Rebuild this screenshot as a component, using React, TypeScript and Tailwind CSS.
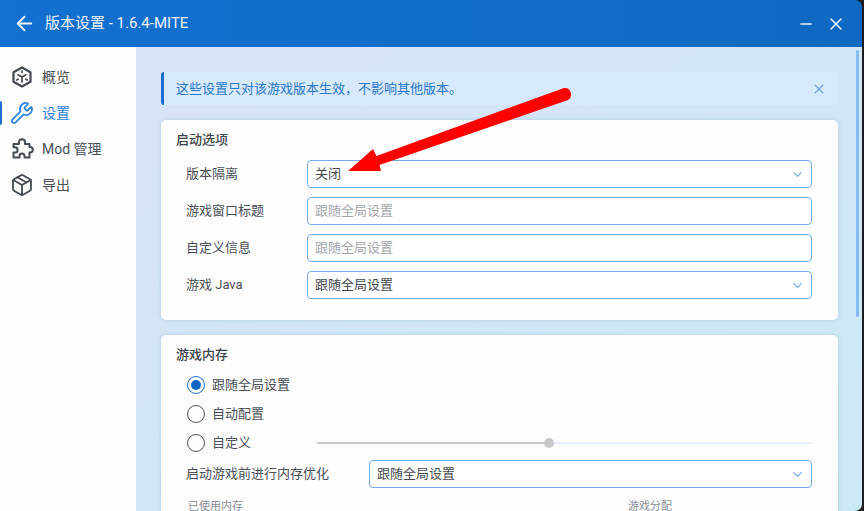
import { ArrowLeft, ChevronDown, Minus, Package, Wrench, X } from 'lucide-react'

const fontFamily = "font-['Roboto','Noto_Sans_CJK_SC',sans-serif]"

function CubeIcon() {
  return (
    <svg width="24" height="24" viewBox="0 0 24 24" fill="none" stroke="#444a52" strokeWidth="2.2" strokeLinejoin="round" strokeLinecap="round">
      <path d="M12 2.500 L20.500 7.200 V16.800 L12 21.500 L3.500 16.800 V7.200 Z" />
      <path d="M8 9.800 L12 12 L16 9.800 M12 12 V17 M12 6 V7.500 M6.800 15 L8.200 14.200 M17.200 15 L15.800 14.200" strokeWidth="1.700" />
    </svg>
  )
}

function PuzzleIcon() {
  return (
    <svg width="24" height="24" viewBox="0 0 24 24" fill="none" stroke="#444a52" strokeWidth="2" strokeLinejoin="round">
      <path d="M9 7 V5.200 a3 3 0 0 1 6 0 V7 H19.500 V10 H20 a2.800 2.800 0 0 1 0 5.600 H19.500 V20.500 H14.500 V19 a2.500 2.500 0 0 0 -5 0 V20.500 H3.500 V15.500 H5 a2.600 2.600 0 0 0 0 -5.200 H3.500 V7 Z" />
    </svg>
  )
}

function SideItem({ icon, label, active }: { icon: React.ReactNode; label: string; active?: boolean }) {
  return (
    <div className="relative flex h-9 items-center gap-[8px] pl-[10px]">
      {active && <div className="absolute top-[6px] left-0 h-6 w-[2px] rounded-r bg-[#1c6fd0]" />}
      {icon}
      <span className={`text-[14px] ${active ? 'text-[#2a7fe0]' : 'text-[#4a4f57]'}`}>{label}</span>
    </div>
  )
}

function Field({ value, placeholder, select }: { value?: string; placeholder?: string; select?: boolean }) {
  return (
    <div className="flex h-7 min-w-0 flex-1 items-center justify-between rounded-[4px] border border-[#74abe6] bg-white pr-[6px] pl-[7px] text-[13px]">
      <span className={value ? 'text-[#45494f]' : 'text-[#a3a6ab]'}>{value ?? placeholder}</span>
      {select && <ChevronDown size={15} strokeWidth={2} className="text-[#74abe6]" />}
    </div>
  )
}

function Row({ label, children }: { label: string; children: React.ReactNode }) {
  return (
    <div className="flex items-center">
      <span className="w-[121px] shrink-0 text-[13px] text-[#4a4f57]">{label}</span>
      {children}
    </div>
  )
}

function Radio({ label, checked }: { label: string; checked?: boolean }) {
  return (
    <div className="flex h-[29px] shrink-0 items-center gap-[7px]">
      <div
        className={`flex h-[18px] w-[18px] items-center justify-center rounded-full border-[1.5px] ${
          checked ? 'border-[#1c6fd0]' : 'border-[#4a4f57]'
        }`}
      >
        {checked && <div className="h-[10px] w-[10px] rounded-full bg-[#1166c4]" />}
      </div>
      <span className="text-[13px] text-[#4a4f57]">{label}</span>
    </div>
  )
}

export default function App() {
  return (
    <div className={`relative flex h-[511px] w-[864px] flex-col overflow-hidden bg-[#1d1d1f] ${fontFamily}`}>
      <div className="flex h-full w-[862px] flex-col overflow-hidden rounded-tr-[7px] rounded-br-[7px]">
        <header className="flex h-[47px] shrink-0 items-center bg-gradient-to-r from-[#1470d0] to-[#0f69c2] pr-[16px] pl-[13px] text-white">
          <ArrowLeft size={23} strokeWidth={2} className="text-[#eef5fc]" />
          <h1 className="ml-[9px] text-[15px] text-[#eaf2fb]">版本设置 - 1.6.4-MITE</h1>
          <div className="ml-auto flex items-center gap-[11px]">
            <Minus size={18} strokeWidth={1.7} className="text-[#e6effa]" />
            <X size={20} strokeWidth={1.8} className="text-[#f2f7fd]" />
          </div>
        </header>
        <div className="flex min-h-0 flex-1">
          <aside className="w-[136px] shrink-0 bg-[#fdfdfe] pt-[12px]">
            <SideItem icon={<CubeIcon />} label="概览" />
            <SideItem icon={<Wrench size={24} strokeWidth={1.7} className="text-[#2a7fe0]" />} label="设置" active />
            <SideItem icon={<PuzzleIcon />} label="Mod 管理" />
            <SideItem icon={<Package size={24} strokeWidth={1.8} className="text-[#444a52]" />} label="导出" />
          </aside>
          <main className="relative flex min-w-0 flex-1 flex-col gap-[15px] overflow-hidden bg-gradient-to-br from-[#d8e3f7] to-[#cbe9f5] pt-[25px] pr-[24px] pl-[25px]">
            <div className="absolute top-[3px] right-[3px] h-[267px] w-[3px] rounded-full bg-[#86bdf0]" />
            <div className="flex h-[33px] shrink-0 items-center rounded-[3px] border-l-[3px] border-[#1c6fd0] bg-[#d7e9fd] pr-[11px] pl-[12px]">
              <span className="text-[13px] text-[#2a78c8]">这些设置只对该游戏版本生效，不影响其他版本。</span>
              <X size={16} strokeWidth={1.7} className="ml-auto text-[#6ba4e0]" />
            </div>
            <section className="flex h-[200px] shrink-0 flex-col rounded-[5px] bg-[#fdfdfe] pt-[10px] pr-[26px] pl-[15px] shadow-[0_0_4px_rgba(120,160,200,0.35)]">
              <h2 className="mb-[11px] text-[13px] leading-[19px] font-medium text-[#3f444b]">启动选项</h2>
              <div className="flex flex-col gap-[9px] pl-[10px]">
                <Row label="版本隔离">
                  <Field value="关闭" select />
                </Row>
                <Row label="游戏窗口标题">
                  <Field placeholder="跟随全局设置" />
                </Row>
                <Row label="自定义信息">
                  <Field placeholder="跟随全局设置" />
                </Row>
                <Row label="游戏 Java">
                  <Field value="跟随全局设置" select />
                </Row>
              </div>
            </section>
            <section className="flex h-[200px] shrink-0 flex-col rounded-[5px] bg-[#fdfdfe] pt-[10px] pr-[26px] pl-[15px] shadow-[0_0_4px_rgba(120,160,200,0.35)]">
              <h2 className="mb-[6px] text-[13px] leading-[19px] font-medium text-[#3f444b]">游戏内存</h2>
              <div className="flex flex-col pl-[11px]">
                <Radio label="跟随全局设置" checked />
                <Radio label="自动配置" />
                <div className="flex items-center">
                  <Radio label="自定义" />
                  <div className="ml-[66px] flex flex-1 items-center">
                    <div className="h-[2px] w-[227px] bg-[#c8c8c8]" />
                    <div className="h-[10px] w-[10px] shrink-0 rounded-full bg-[#c8c8c8]" />
                    <div className="h-[2px] flex-1 bg-[#e8f0fb]" />
                  </div>
                </div>
              </div>
              <div className="mt-[3px] flex items-center pl-[10px]">
                <span className="w-[183px] shrink-0 text-[13px] text-[#4a4f57]">启动游戏前进行内存优化</span>
                <Field value="跟随全局设置" select />
              </div>
              <div className="mt-[11px] flex pl-[12px] text-[11px] text-[#8a8e94]">
                <span className="w-[440px]">已使用内存</span>
                <span>游戏分配</span>
              </div>
            </section>
          </main>
        </div>
      </div>
      <svg className="absolute top-0 left-0 h-[511px] w-[864px]" viewBox="0 0 864 511" fill="none">
        <path d="M348 171 L373 149 L376.500 156 L564 88 A6.500 6.500 0 0 1 568 100 L379.500 165 L381 171 Z" fill="#ff0000" />
      </svg>
    </div>
  )
}
